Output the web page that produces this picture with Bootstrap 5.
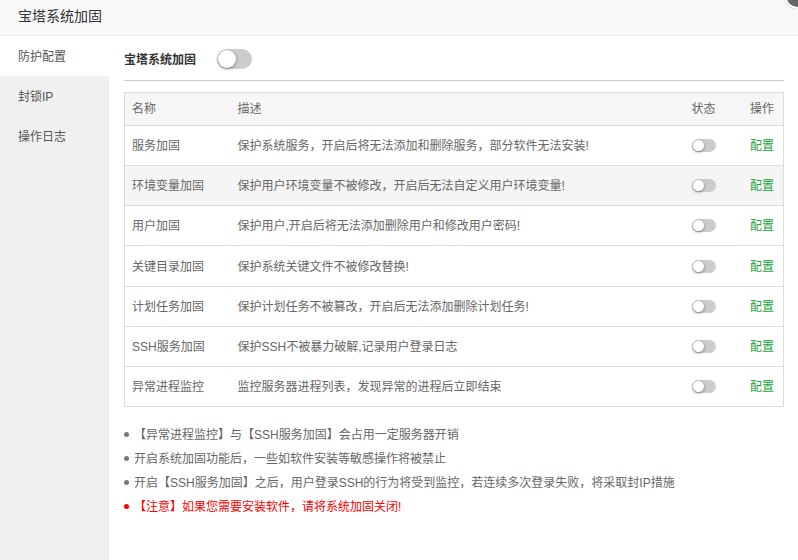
<!DOCTYPE html>
<html lang="zh"><head><meta charset="utf-8">
<link href="https://cdn.jsdelivr.net/npm/bootstrap@5.3.0/dist/css/bootstrap.min.css" rel="stylesheet">
<style>
html,body{height:100%;}
body{font-family:"Liberation Sans","Noto Sans CJK SC",sans-serif;font-size:12px;color:#666;background:#fff;overflow:hidden;}
.shell{height:560px;width:798px;position:relative;overflow:hidden;}
.dlg-head{height:36px;background:#f8f8f8;border-bottom:1px solid #eee;font-size:14px;color:#333;padding-left:18px;line-height:32px;}
.dlg-close{position:absolute;top:-13px;right:-13px;width:26px;height:22px;border-radius:50%;background:#666;border:2px solid #fff;box-shadow:0 0 1px #999;}
.side{width:109px;height:524px;background:#f0f0f0;flex:none;}
.side-item{height:40px;line-height:42px;padding-left:18px;color:#555;}
.side-item.on{background:#fff;}
.main{width:660px;margin-left:15px;}
.top-line{height:45px;border-bottom:1px solid #ccc;padding-top:12px;}
.top-title{font-weight:700;color:#333;width:93px;line-height:24px;}
.sw{display:block;border-radius:10px;background:#ccc;position:relative;}
.sw::after{content:"";position:absolute;left:1px;top:1px;border-radius:50%;background:#fff;box-shadow:0 1px 3px rgba(0,0,0,.45);}
.sw-lg{width:35px;height:20px;margin-top:1px;}
.sw-lg::after{width:18px;height:18px;}
.sw-sm{width:24px;height:13px;}
.sw-sm::after{width:11px;height:11px;}
.tbl{width:660px;margin-top:11px;border:1px solid #ddd;table-layout:fixed;border-collapse:collapse;color:#666;}
.tbl th,.tbl td{padding:0 8px;border-bottom:1px solid #ddd;font-weight:400;vertical-align:middle;white-space:nowrap;}
.tbl th{background:#f6f6f6;height:33px;}
.tbl td{height:40.17px;}
.tbl td:not(:nth-child(3)){padding-top:1px;}
.tbl tr.alt td{background:#f5f5f5;}
.tbl td:nth-child(2),.tbl th:nth-child(2){padding-left:6px;}
.tbl td:first-child,.tbl th:first-child{padding-left:7px;}
.tbl td:last-child,.tbl th:last-child{text-align:right;padding-right:9px;}
.cfg{color:#20a53a;text-decoration:none;}
.notes{list-style:none;margin:16px 0 0;padding:0;color:#666;}
.notes li{height:24px;line-height:24px;}
.notes li::before{content:"";display:inline-block;width:5px;height:5px;border-radius:50%;background:#777;margin-right:5px;vertical-align:2px;}
.notes li.warn{color:#f00;}
.notes li.warn::before{background:#f00;}
</style></head><body>
<div class="shell">
<div class="dlg-head">宝塔系统加固</div>
<span class="dlg-close"></span>
<div class="d-flex">
<div class="side">
<div class="side-item on">防护配置</div>
<div class="side-item">封锁IP</div>
<div class="side-item">操作日志</div>
</div>
<div class="main">
<div class="top-line d-flex align-items-start"><span class="top-title">宝塔系统加固</span><span class="sw sw-lg"></span></div>
<table class="tbl">
<colgroup><col style="width:107px"><col><col style="width:58px"><col style="width:42px"></colgroup>
<thead><tr><th>名称</th><th>描述</th><th>状态</th><th>操作</th></tr></thead>
<tbody>
<tr><td>服务加固</td><td>保护系统服务，开启后将无法添加和删除服务，部分软件无法安装!</td><td><span class="sw sw-sm"></span></td><td><a class="cfg" href="#">配置</a></td></tr>
<tr class="alt"><td>环境变量加固</td><td>保护用户环境变量不被修改，开启后无法自定义用户环境变量!</td><td><span class="sw sw-sm"></span></td><td><a class="cfg" href="#">配置</a></td></tr>
<tr><td>用户加固</td><td>保护用户,开启后将无法添加删除用户和修改用户密码!</td><td><span class="sw sw-sm"></span></td><td><a class="cfg" href="#">配置</a></td></tr>
<tr><td>关键目录加固</td><td>保护系统关键文件不被修改替换!</td><td><span class="sw sw-sm"></span></td><td><a class="cfg" href="#">配置</a></td></tr>
<tr><td>计划任务加固</td><td>保护计划任务不被篡改，开启后无法添加删除计划任务!</td><td><span class="sw sw-sm"></span></td><td><a class="cfg" href="#">配置</a></td></tr>
<tr><td>SSH服务加固</td><td>保护SSH不被暴力破解,记录用户登录日志</td><td><span class="sw sw-sm"></span></td><td><a class="cfg" href="#">配置</a></td></tr>
<tr><td>异常进程监控</td><td>监控服务器进程列表，发现异常的进程后立即结束</td><td><span class="sw sw-sm"></span></td><td><a class="cfg" href="#">配置</a></td></tr>
</tbody></table>
<ul class="notes">
<li>【异常进程监控】与【SSH服务加固】会占用一定服务器开销</li>
<li>开启系统加固功能后，一些如软件安装等敏感操作将被禁止</li>
<li>开启【SSH服务加固】之后，用户登录SSH的行为将受到监控，若连续多次登录失败，将采取封IP措施</li>
<li class="warn">【注意】如果您需要安装软件，请将系统加固关闭!</li>
</ul>
</div>
</div>
</div>
</body></html>
